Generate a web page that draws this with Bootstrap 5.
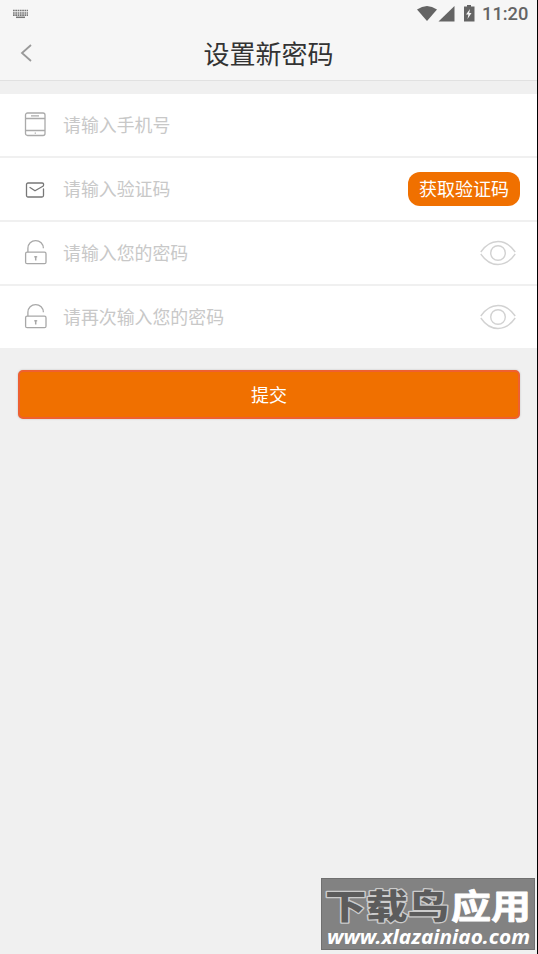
<!DOCTYPE html>
<html lang="zh-CN">
<head>
<meta charset="utf-8">
<meta name="viewport" content="width=device-width, initial-scale=1">
<title>设置新密码</title>
<link href="https://cdn.jsdelivr.net/npm/bootstrap@5.3.0/dist/css/bootstrap.min.css" rel="stylesheet">
<style>
body{font-family:Roboto,"Noto Sans CJK SC",sans-serif;background:#f0f0f0}
svg{display:block;flex:none}
.screen{height:954px;border-right:1px solid #000;background:#f0f0f0}
.top-area{height:81px;background:#f6f6f6;border-bottom:1px solid #e1e1e1}
.status{height:27px;padding:0 8px 0 12px;color:#646464}
.clock{font-size:18.3px;line-height:27px;font-weight:500;margin-left:7px;width:47px;white-space:nowrap}
.title-bar{height:52px;padding:0 20px}
.title-bar h1{font-size:26px;line-height:48px;padding-top:4px;color:#333;font-weight:400}
.side{width:14px}
.fields{margin-top:13px;gap:2px}
.field-row{height:62px;padding:0 17px 0 24px;background:#fff}
.field-icon{width:24px;margin-right:15px}
.hint{font-size:17.9px;line-height:26px;padding-top:2px;color:#c8c8c8}
.btn-code{width:112px;height:34px;border-radius:12px;background:#f07000;color:#fff;font-size:18px;line-height:32px}
.btn-code span,.btn-send span{display:block;padding-top:2px}
.btn-send{width:502px;height:49px;margin:22px 0 0 18px;background:#f07000;border:2px solid #ee6030;border-radius:5px;color:#fff;font-size:18px;line-height:44px;box-shadow:0 0 2px #bbb}
.btn-code:hover,.btn-send:hover{background:#f07000;color:#fff}
.site-tag{left:321px;top:878px;width:214px;height:72px;background:#828282;border:1px solid #707070}
</style>
</head>
<body>
<main class="screen position-relative overflow-hidden">
  <header class="top-area">
    <div class="status d-flex align-items-center">
      <svg width="17" height="10" viewBox="0 0 17 10" fill="none" stroke="#777"><path d="M1 1.5h15M1 4h15M1 6.2h15" stroke-width="1.7" stroke-dasharray="1.7 .6"/><path d="M4 8.3h9" stroke-width="1.5"/></svg>
      <svg class="ms-auto" width="58" height="18" viewBox="0 0 58 18" fill="#646464"><path d="M0 4.500Q10-2.500 20 4.500L10 16Z"/><path d="M21.500 16.500 37.500 1v15.500Z"/><path d="M47 1.500h3V0h4v1.500h3.500v15H47Z"/><path d="m53 4-4 5.500h2.400L50.500 14l4-6h-2.300Z" fill="#f6f6f6"/></svg>
      <span class="clock">11:20</span>
    </div>
    <div class="title-bar d-flex align-items-center justify-content-between">
      <svg class="side" width="14" height="18" viewBox="0 0 14 18" fill="none" stroke="#999" stroke-width="1.8"><path d="M11 1 2 9l9 8"/></svg>
      <h1 class="m-0">设置新密码</h1>
      <span class="side"></span>
    </div>
  </header>

  <section class="fields d-flex flex-column">
    <div class="field-row d-flex align-items-center">
      <svg class="field-icon" width="24" height="26" viewBox="0 0 24 26" fill="none" stroke="#aaa" stroke-width="1.3"><rect x="1.500" y="1" width="19.500" height="22.500" rx="2"/><path d="M1.500 6.500h19.500M1.500 18.500h19.500M7 3.800h8"/><path d="M10.700 21.200h1.200"/></svg>
      <span class="hint">请输入手机号</span>
    </div>
    <div class="field-row d-flex align-items-center">
      <svg class="field-icon" width="24" height="20" viewBox="0 0 24 20" fill="none" stroke="#777" stroke-width="1.3" stroke-linecap="round" stroke-linejoin="round"><path d="M19.500 10v6.500a1.500 1.500 0 0 1-1.500 1.500H4a1.500 1.500 0 0 1-1.500-1.500V5.500A1.500 1.500 0 0 1 4 4h14q2.300 0 1.300 3L11 11.800 6 8.500"/></svg>
      <span class="hint">请输入验证码</span>
      <button type="button" class="btn btn-code ms-auto p-0 border-0"><span>获取验证码</span></button>
    </div>
    <div class="field-row d-flex align-items-center">
      <svg class="field-icon" width="24" height="28" viewBox="0 0 24 28" fill="none" stroke="#a8a8a8" stroke-width="1.3"><rect x="1.600" y="13.200" width="20.400" height="11.500" rx="1.500"/><path d="M3.900 13.200V9.300a7.700 7.700 0 0 1 15.500 0"/><path d="M11.700 17v4.500" stroke-width="1.500"/><path d="M10.200 17.800h3"/></svg>
      <span class="hint">请输入您的密码</span>
      <svg class="ms-auto me-1" width="36" height="26" viewBox="0 0 36 26" fill="none" stroke="#d2d2d2" stroke-width="1.400"><path d="M.8 12Q8 1.500 18 1.500T35.200 12M.8 14Q8 24.500 18 24.500T35.200 14"/><circle cx="18" cy="13" r="7.300"/></svg>
    </div>
    <div class="field-row d-flex align-items-center">
      <svg class="field-icon" width="24" height="28" viewBox="0 0 24 28" fill="none" stroke="#a8a8a8" stroke-width="1.3"><rect x="1.600" y="13.200" width="20.400" height="11.500" rx="1.500"/><path d="M3.900 13.200V9.300a7.700 7.700 0 0 1 15.500 0"/><path d="M11.700 17v4.500" stroke-width="1.500"/><path d="M10.200 17.800h3"/></svg>
      <span class="hint">请再次输入您的密码</span>
      <svg class="ms-auto me-1" width="36" height="26" viewBox="0 0 36 26" fill="none" stroke="#d2d2d2" stroke-width="1.400"><path d="M.8 12Q8 1.500 18 1.500T35.200 12M.8 14Q8 24.500 18 24.500T35.200 14"/><circle cx="18" cy="13" r="7.300"/></svg>
    </div>
  </section>
  <button type="button" class="btn btn-send d-block p-0"><span>提交</span></button>

  <aside class="site-tag position-absolute">
    <svg width="212" height="70" viewBox="0 0 212 70" font-family="'Noto Sans CJK SC',sans-serif" font-weight="900">
      <g font-size="34" paint-order="stroke" stroke-linejoin="round">
        <text x="3" y="40" textLength="124" lengthAdjust="spacingAndGlyphs" fill="#5c5c5c" stroke="#ccc" stroke-width="2.500">下载鸟</text>
        <text x="129" y="40" textLength="80" lengthAdjust="spacingAndGlyphs" fill="#fff" font-weight="700" stroke="#fff" stroke-width=".8">应用</text>
      </g>
      <text x="5" y="64.500" font-family="'Noto Sans','Open Sans',sans-serif" font-size="19.500" font-weight="700" font-style="italic" textLength="203" lengthAdjust="spacingAndGlyphs" fill="#fff">www.xlazainiao.com</text>
    </svg>
  </aside>
</main>
<script src="https://cdn.jsdelivr.net/npm/bootstrap@5.3.0/dist/js/bootstrap.bundle.min.js"></script>
</body>
</html>
